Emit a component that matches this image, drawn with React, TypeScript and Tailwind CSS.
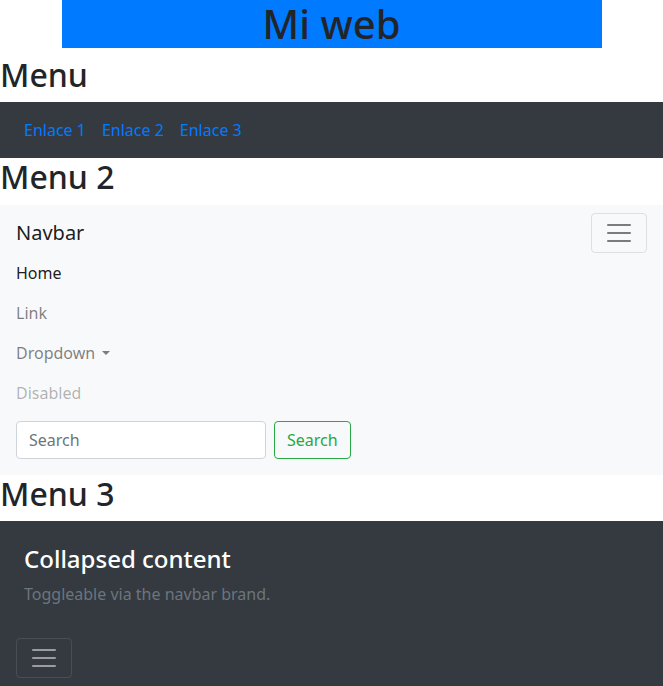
import { useState } from "react";

function TogglerIcon({ dark }: { dark?: boolean }) {
  return (
    <svg width="30" height="30" viewBox="0 0 30 30" className="block">
      <path
        d="M4 7h22M4 15h22M4 23h22"
        stroke={dark ? "rgba(255,255,255,0.5)" : "rgba(0,0,0,0.5)"}
        strokeWidth="2"
        strokeLinecap="round"
        strokeMiterlimit="10"
      />
    </svg>
  );
}

function App() {
  const [search, setSearch] = useState("");

  return (
    <div className="font-['Noto_Sans',sans-serif] text-base leading-normal text-[#212529] bg-white">
      <div className="w-[540px] mx-auto bg-[#007bff]">
        <h1 className="text-center text-[40px] leading-[1.2] font-medium">Mi web</h1>
      </div>
      <div className="h-2" />

      <h2 className="text-[32px] leading-[1.2] font-medium mb-2">Menu</h2>
      <nav className="bg-[#343a40] px-4 py-2">
        <ul className="flex">
          <li>
            <a href="#" className="block p-2 text-[#007bff]">Enlace 1</a>
          </li>
          <li>
            <a href="#" className="block p-2 text-[#007bff]">Enlace 2</a>
          </li>
          <li>
            <a href="#" className="block p-2 text-[#007bff]">Enlace 3</a>
          </li>
        </ul>
      </nav>

      <h2 className="text-[32px] leading-[1.2] font-medium mb-2">Menu 2</h2>
      <nav className="bg-[#f8f9fa] px-4 py-2 flex flex-wrap items-center justify-between">
        <a href="#" className="text-[20px] leading-[30px] py-[5px] mr-4 text-black/90">
          Navbar
        </a>
        <button
          type="button"
          className="px-3 py-1 border border-black/10 rounded"
          aria-label="Toggle navigation"
        >
          <TogglerIcon />
        </button>
        <div className="basis-full">
          <ul className="flex flex-col">
            <li>
              <a href="#" className="block py-2 text-black/90">Home</a>
            </li>
            <li>
              <a href="#" className="block py-2 text-black/50">Link</a>
            </li>
            <li>
              <a href="#" className="block py-2 text-black/50">
                Dropdown
                <span className="inline-block ml-[0.4em] align-[0.255em] w-0 h-0 border-t-[0.3em] border-x-[0.3em] border-t-black/50 border-x-transparent border-b-0" />
              </a>
            </li>
            <li>
              <span className="block py-2 text-black/30">Disabled</span>
            </li>
          </ul>
          <form className="flex my-2" onSubmit={(e) => e.preventDefault()}>
            <input
              type="search"
              value={search}
              onChange={(e) => setSearch(e.target.value)}
              placeholder="Search"
              className="w-[250px] h-[38px] px-3 py-1.5 bg-white border border-[#ced4da] rounded text-[#495057] placeholder-[#6c757d] outline-none mr-2"
            />
            <button
              type="submit"
              className="h-[38px] px-3 py-1.5 border border-[#28a745] rounded text-[#28a745]"
            >
              Search
            </button>
          </form>
        </div>
      </nav>

      <h2 className="text-[32px] leading-[1.2] font-medium mb-2">Menu 3</h2>
      <div className="bg-[#343a40]">
        <div className="p-6">
          <h5 className="text-white text-[24px] leading-[1.2] font-medium mb-2">
            Collapsed content
          </h5>
          <span className="text-[#6c757d]">Toggleable via the navbar brand.</span>
        </div>
        <nav className="px-4 py-2 flex">
          <button
            type="button"
            className="px-3 py-1 border border-white/10 rounded"
            aria-label="Toggle navigation"
          >
            <TogglerIcon dark />
          </button>
        </nav>
      </div>
    </div>
  );
}

export default App;
